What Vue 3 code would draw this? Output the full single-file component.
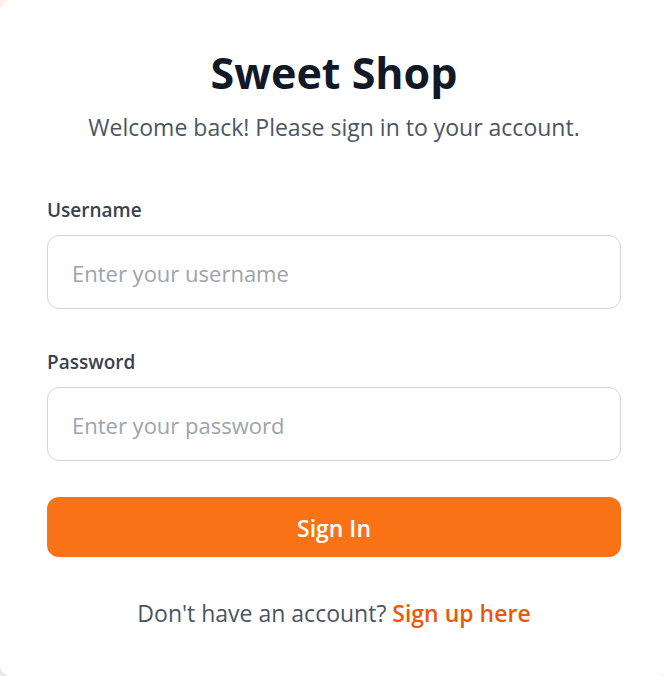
<script setup>
import { ref } from 'vue'

const username = ref('')
const password = ref('')
</script>

<template>
  <main class="page">
    <section class="card">
      <header class="intro">
        <h1>Sweet Shop</h1>
        <p>Welcome back! Please sign in to your account.</p>
      </header>
      <form @submit.prevent>
        <div class="field">
          <label for="username">Username</label>
          <input id="username" v-model="username" type="text" placeholder="Enter your username" />
        </div>
        <div class="field">
          <label for="password">Password</label>
          <input id="password" v-model="password" type="password" placeholder="Enter your password" />
        </div>
        <button type="submit">Sign In</button>
      </form>
      <p class="signup">Don't have an account? <a href="#signup">Sign up here</a></p>
    </section>
  </main>
</template>

<style>
body {
  margin: 0;
  background: linear-gradient(#fff1e8, #efe8eb);
}
</style>

<style scoped>
.page {
  font-family: "Segoe UI", "Open Sans", "Noto Sans", sans-serif;
  color: #4b5563;
}
.card {
  box-sizing: border-box;
  padding: 47px 42px 45px 47px;
  border-radius: 12px 0 4px 12px;
  background: #fff;
}
.intro {
  text-align: center;
  margin-bottom: 48px;
}
h1 {
  margin: 0 0 10px;
  font-size: 43px;
  line-height: 52px;
  font-weight: 700;
  color: #111827;
}
.intro p,
.signup {
  margin: 0;
  font-size: 23px;
  line-height: 36px;
}
form {
  display: flex;
  flex-direction: column;
  gap: 36px;
}
.field {
  display: flex;
  flex-direction: column;
  gap: 8px;
}
label {
  font-size: 19px;
  line-height: 34px;
  font-weight: 600;
  color: #374151;
}
input {
  box-sizing: border-box;
  width: 100%;
  height: 74px;
  padding: 2px 24px 0;
  border: 1px solid #d1d5db;
  border-radius: 12px;
  background: #fff;
  font: inherit;
  font-size: 22px;
  color: #111827;
}
input::placeholder {
  color: #9ca3af;
  opacity: 1;
}
button {
  height: 60px;
  padding: 2px 24px 0;
  border: 0;
  border-radius: 12px;
  background: #f97316;
  color: #fff;
  font: inherit;
  font-size: 23px;
  font-weight: 600;
  cursor: pointer;
}
.signup {
  margin-top: 38px;
  text-align: center;
}
a {
  color: #ea580c;
  font-weight: 600;
  text-decoration: none;
}
</style>
